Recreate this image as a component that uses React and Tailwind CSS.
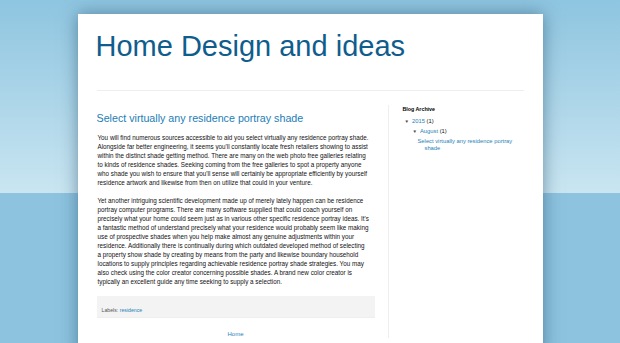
const paragraphOne = [
  "You will find numerous sources accessible to aid you select virtually any residence portray shade.",
  "Alongside far better engineering, it seems you'll constantly locate fresh retailers showing to assist",
  "within the distinct shade getting method. There are many on the web photo free galleries relating",
  "to kinds of residence shades. Seeking coming from the free galleries to spot a property anyone",
  "who shade you wish to ensure that you'll sense will certainly be appropriate efficiently by yourself",
  "residence artwork and likewise from then on utilize that could in your venture.",
];

const paragraphTwo = [
  "Yet another intriguing scientific development made up of merely lately happen can be residence",
  "portray computer programs. There are many software supplied that could coach yourself on",
  "precisely what your home could seem just as in various other specific residence portray ideas. It's",
  "a fantastic method of understand precisely what your residence would probably seem like making",
  "use of prospective shades when you help make almost any genuine adjustments within your",
  "residence. Additionally there is continually during which outdated developed method of selecting",
  "a property show shade by creating by means from the party and likewise boundary household",
  "locations to supply principles regarding achievable residence portray shade strategies. You may",
  "also check using the color creator concerning possible shades. A brand new color creator is",
  "typically an excellent guide any time seeking to supply a selection.",
];

function Paragraph({ lines }) {
  return (
    <div>
      {lines.map((line) => (
        <div key={line} className="whitespace-nowrap">
          {line}
        </div>
      ))}
    </div>
  );
}

function Sidebar() {
  return (
    <aside className="ml-[13px] flex-1 border-l border-[#eeeeee] pl-[14px] text-[5.8px] text-[#111111]">
      <h2 className="text-[5.3px] font-bold leading-[8px] text-black">
        Blog Archive
      </h2>
      <div className="mt-[5px] pl-[2px] leading-[7px]">
        <span className="mr-[3px] text-[4.5px] text-[#444444]">▼</span>
        <a className="text-[#1f82b8]">2015</a> (1)
      </div>
      <div className="mt-[3px] pl-[10px] leading-[7px]">
        <span className="mr-[3px] text-[4.5px] text-[#444444]">▼</span>
        <a className="text-[#1f82b8]">August</a> (1)
      </div>
      <div className="mt-[3px] pl-[22px] -indent-[7px] leading-[7px] text-[#1f82b8]">
        Select virtually any residence portray
        <br />
        shade
      </div>
    </aside>
  );
}

function App() {
  return (
    <div className="min-h-[343px] w-full overflow-hidden bg-[#8dc3df] bg-[linear-gradient(to_bottom,#8ec5e0_0px,#c9e5f1_193px,#8dc3df_193px)] pt-[14px] font-['Liberation_Sans',Arial,sans-serif]">
      <div className="mx-auto h-[340px] w-[465px] bg-white px-[19px] pt-[18px] shadow-[0_0_16px_rgba(20,60,90,0.5)]">
        <h1 className="-ml-[1px] text-[29px] leading-[29px] text-[#0f5d8d]">
          Home Design and ideas
        </h1>
        <div className="mt-[29px] h-px bg-[#eeeeee]" />
        <div className="mt-[14px] flex">
          <main className="w-[278px] pt-[7px]">
            <h3 className="text-[10.7px] leading-[13px] text-[#1c7db5]">
              Select virtually any residence portray shade
            </h3>
            <div className="mt-[7.5px] pl-[1px] text-[6.3px] leading-[9px] text-[#111111]">
              <Paragraph lines={paragraphOne} />
              <div className="h-[9px]" />
              <Paragraph lines={paragraphTwo} />
            </div>
            <div className="mt-[10.5px] border-b border-[#eeeeee] bg-[#f3f3f3] pb-[3px] pl-[5px] pt-[11px] text-[5.2px] leading-[7px] text-[#555555]">
              Labels: <a className="text-[#1f82b8]">residence</a>
            </div>
            <div className="mt-[12px] text-center text-[6px] leading-[8px] text-[#1f82b8]">
              Home
            </div>
          </main>
          <Sidebar />
        </div>
      </div>
    </div>
  );
}

export default App;
